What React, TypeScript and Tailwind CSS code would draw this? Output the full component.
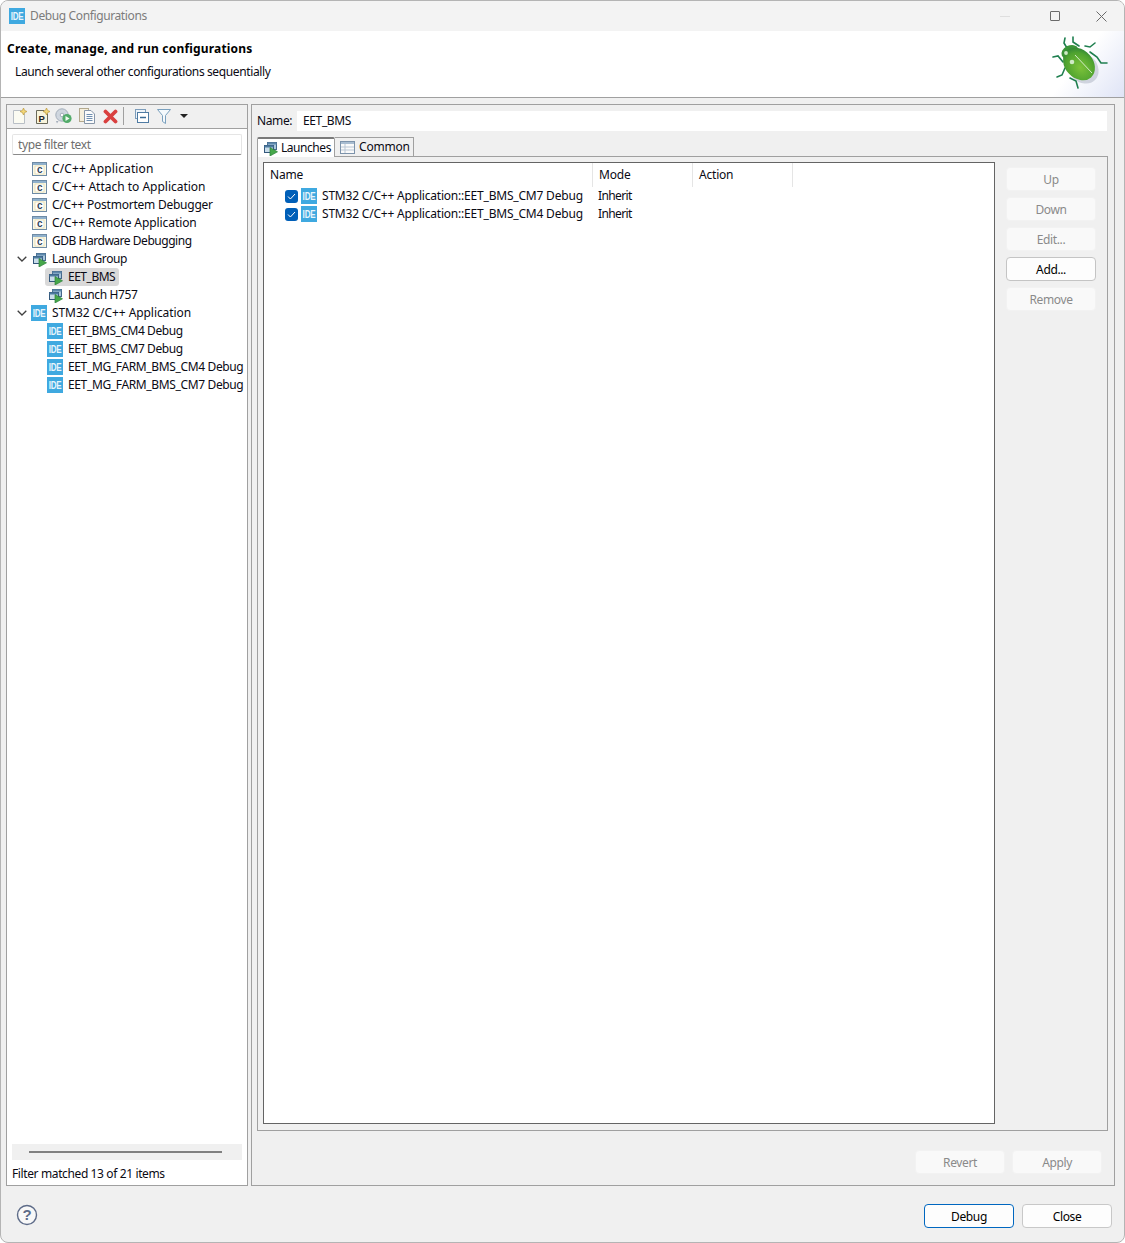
import type { ReactNode } from "react";

function IdeIcon({ className = "" }: { className?: string }) {
    return (
        <svg width="16" height="16" viewBox="0 0 16 16" className={`shrink-0 ${className}`}>
            <rect width="16" height="16" fill="#3fa9e0" />
            <text transform="translate(8 12) scale(0.8 1)" textAnchor="middle" fontSize="10" fontWeight="700" fill="#e8f5fc" fontFamily="'Liberation Sans', sans-serif">IDE</text>
        </svg>
    );
}

function CIcon() {
    return (
        <svg width="16" height="16" viewBox="0 0 16 16" className="shrink-0">
            <rect x="1.5" y="1.5" width="14" height="13" fill="#fbf8e6" stroke="#6e8ba5" />
            <rect x="2" y="2" width="13" height="2" fill="#8fb0cc" />
            <rect x="4" y="5" width="9" height="8" fill="#ffffff" stroke="#d9cf9a" strokeWidth="0.6" />
            <text x="8.5" y="12" textAnchor="middle" fontSize="10" fontWeight="700" fill="#33465c" fontFamily="'Liberation Sans', sans-serif">c</text>
        </svg>
    );
}

function GroupIcon() {
    return (
        <svg width="16" height="16" viewBox="0 0 16 16" className="shrink-0">
            <g transform="translate(1 0)">
                <rect x="4.5" y="2.5" width="9" height="7" fill="#a9c6dd" stroke="#44688a" />
                <rect x="4.5" y="2.5" width="9" height="2" fill="#5e88ac" />
                <rect x="1.5" y="5.5" width="9" height="7" fill="#c9dcea" stroke="#34587c" />
                <rect x="1.5" y="5.5" width="9" height="2" fill="#4d7aa0" />
                <path d="M7 7.5 L14.5 11.8 L7 16 Z" fill="#46a84a" stroke="#2c7f3a" strokeWidth="0.7" />
            </g>
        </svg>
    );
}

function Chevron() {
    return (
        <svg width="10" height="6" viewBox="0 0 10 6" className="shrink-0">
            <path d="M0.7 0.7 L5 5 L9.3 0.7" fill="none" stroke="#404040" strokeWidth="1.3" />
        </svg>
    );
}

function NewIcon({ p = false }: { p?: boolean }) {
    return (
        <svg width="16" height="16" viewBox="0 0 16 16" className="shrink-0">
            <path d="M1.5 2.5 H9 L12.5 6 V15.5 H1.5 Z" fill={p ? "#f8f4dc" : "#fbfbf2"} stroke={p ? "#6a6a5a" : "#b9bfc6"} />
            {p && <text x="6.5" y="14" textAnchor="middle" fontSize="9.5" fontWeight="700" fill="#222" fontFamily="'Liberation Sans', sans-serif">P</text>}
            <path d="M11.5 0 L12.6 2.4 L15 3.5 L12.6 4.6 L11.5 7 L10.4 4.6 L8 3.5 L10.4 2.4 Z" fill="#f2d777" stroke="#b58f2c" strokeWidth="0.6" />
        </svg>
    );
}

function DiscIcon() {
    return (
        <svg width="17" height="16" viewBox="0 0 17 16" className="shrink-0">
            <circle cx="7" cy="7" r="6.2" fill="#cfd6df" stroke="#a4aebb" />
            <circle cx="7" cy="7" r="1.8" fill="#fff" stroke="#a4aebb" />
            <circle cx="12" cy="10.5" r="4.6" fill="#52ab6a" />
            <path d="M10.5 8 L14.6 10.5 L10.5 13 Z" fill="#f2fbf2" />
            <path d="M1 13 L3.5 13 L2 15.5 Z" fill="#a4aebb" />
        </svg>
    );
}

function CopyIcon() {
    return (
        <svg width="16" height="16" viewBox="0 0 16 16" className="shrink-0">
            <rect x="0.5" y="0.5" width="9" height="13" fill="#f6efdc" stroke="#b3a98e" />
            <path d="M5.5 2.5 H12 L15.5 6 V15.5 H5.5 Z" fill="#fbfbfb" stroke="#8796a8" />
            <path d="M7.5 6.5 H13.5 M7.5 8.5 H13.5 M7.5 10.5 H13.5 M7.5 12.5 H13.5" stroke="#6f8fb0" />
        </svg>
    );
}

function DeleteIcon() {
    return (
        <svg width="15" height="15" viewBox="0 0 15 15" className="shrink-0">
            <path d="M2.5 2.5 L12.5 12.5 M12.5 2.5 L2.5 12.5" stroke="#d9403f" strokeWidth="3.8" strokeLinecap="round" />
        </svg>
    );
}

function CollapseIcon() {
    return (
        <svg width="14" height="14" viewBox="0 0 14 14" className="shrink-0">
            <rect x="0.5" y="0.5" width="10" height="9" fill="#eef4fa" stroke="#7d9dbb" />
            <rect x="2.5" y="3.5" width="11" height="10" fill="#fff" stroke="#4f7ba3" />
            <path d="M5 8.5 H11" stroke="#3b6a94" strokeWidth="1.5" />
        </svg>
    );
}

function FilterIcon() {
    return (
        <svg width="14" height="15" viewBox="0 0 14 15" className="shrink-0">
            <path d="M0.5 0.5 H13.5 L8.5 6.5 V14.5 L5.5 12.5 V6.5 Z" fill="#f4f9fc" stroke="#7aa0be" />
        </svg>
    );
}

function TableIcon() {
    return (
        <svg width="15" height="13" viewBox="0 0 15 13" className="shrink-0">
            <rect x="0.5" y="0.5" width="14" height="12" fill="#fafafa" stroke="#7d93ab" />
            <rect x="1" y="1" width="13" height="2" fill="#a9bdd1" />
            <path d="M5 3 V12 M1 6 H14 M1 9 H14" stroke="#b9c6d4" />
        </svg>
    );
}

function CheckBox() {
    return (
        <span className="flex h-[13px] w-[13px] shrink-0 items-center justify-center rounded-[3px] bg-[#005fb8]">
            <svg width="9" height="7" viewBox="0 0 9 7">
                <path d="M1 3.5 L3.4 6 L8 1" fill="none" stroke="#ffffff" strokeWidth="1" />
            </svg>
        </span>
    );
}

function BugLogo() {
    const legs = [
        "M1065 38 L1064 43 L1067 48",
        "M1073 37 L1073 42 L1079 46",
        "M1095 43 L1090 47 L1085 46",
        "M1053 57 L1058 56 L1063 62",
        "M1107 63 L1101 63 L1097 57 L1090 52",
        "M1057 77 L1062 75 L1065 68",
        "M1078 88 L1076 81 L1070 78",
    ];
    return (
        <svg width="62" height="66" viewBox="1050 31 62 66" className="mr-[12px] shrink-0">
            <defs>
                <radialGradient id="shell" cx="0.6" cy="0.55" r="0.65">
                    <stop offset="0" stopColor="#7cc23a" />
                    <stop offset="0.7" stopColor="#4fa32f" />
                    <stop offset="1" stopColor="#2a8038" />
                </radialGradient>
            </defs>
            <ellipse cx="1083" cy="68" rx="17" ry="14" fill="#8a92a6" opacity="0.35" transform="rotate(45 1083 68)" />
            {legs.map((d) => (
                <path key={d} d={d} fill="none" stroke="#1f7f50" strokeWidth="1.6" strokeLinecap="round" />
            ))}
            <ellipse cx="1070" cy="52" rx="9" ry="6.5" fill="#3b9438" transform="rotate(-25 1070 52)" />
            <ellipse cx="1079" cy="64" rx="18" ry="14" fill="url(#shell)" transform="rotate(48 1079 64)" />
            <path d="M1075 55 L1092 73" stroke="#e2f3da" strokeWidth="0.9" />
            <circle cx="1066" cy="53" r="1.9" fill="#cfeac6" />
            <circle cx="1072" cy="62" r="2.3" fill="#cfeac6" />
        </svg>
    );
}

function TreeRow({ indent, icon, chevron, selected, track = "", children }: { indent: string; icon: ReactNode; chevron?: boolean; selected?: boolean; track?: string; children: ReactNode }) {
    return (
        <div className={`flex h-[18px] items-center ${indent}`}>
            {chevron && <span className="mr-[4px] ml-[-14px] flex w-[10px] justify-center"><Chevron /></span>}
            <span className={`flex h-[18px] items-center whitespace-nowrap ${selected ? "ml-[-2px] rounded-[3px] bg-[#d9d9d9] pr-[4px] pl-[2px]" : ""}`}>
                {icon}
                <span className={`ml-[5px] ${track}`}>{children}</span>
            </span>
        </div>
    );
}

function SideButton({ label, active }: { label: string; active?: boolean }) {
    return (
        <button className={`flex h-[24px] w-[90px] items-center justify-center rounded-[4px] border pt-[1px] ${active ? "border-[#c4c4c4] bg-[#fdfdfd] text-black" : "border-[#f2f2f2] bg-[#f9f9f9] text-[#8a8a8a]"}`}>
            {label}
        </button>
    );
}

export default function App() {
    return (
        <div className="flex h-[1243px] w-[1125px] flex-col overflow-hidden rounded-[8px] border border-[#b4b4b4] bg-[#f0f0f0] font-['Noto_Sans','Open_Sans',sans-serif] text-[12px] leading-[18px] tracking-[-0.38px] text-[#0a0a14]">
            {/* title bar */}
            <div className="flex h-[30px] shrink-0 items-center bg-[#f3f3f3] pl-[8px]">
                <IdeIcon />
                <span className="ml-[5px] text-[#7c7c7c]">Debug Configurations</span>
                <div className="ml-auto flex items-center pr-[17px]">
                    <span className="mr-[40px] h-px w-[10px] bg-[#dedede]" />
                    <span className="mr-[36px] h-[10px] w-[10px] rounded-[1px] border border-[#6a6a6a]" />
                    <svg width="11" height="11" viewBox="0 0 11 11">
                        <path d="M0.5 0.5 L10.5 10.5 M10.5 0.5 L0.5 10.5" stroke="#6a6a6a" />
                    </svg>
                </div>
            </div>

            {/* header */}
            <div className="flex h-[67px] shrink-0 justify-between border-b border-[#a0a0a0] bg-[linear-gradient(128deg,#ffffff_calc(100%-58px),#dfe4f6_100%)] pl-[6px]">
                <div className="pt-[9px]">
                    <div className="font-bold tracking-[0.18px] text-black">Create, manage, and run configurations</div>
                    <div className="mt-[5px] pl-[8px]">Launch several other configurations sequentially</div>
                </div>
                <BugLogo />
            </div>

            {/* panels */}
            <div className="flex min-h-0 flex-1 gap-[3px] pt-[6px] pr-[9px] pl-[5px]">
                <div className="flex w-[242px] shrink-0 flex-col border border-[#a0a0a0] bg-white">
                    <div className="flex h-[24px] shrink-0 items-center border-b border-[#a0a0a0] bg-[#f0f0f0] pb-[1px] pl-[5px]">
                        <span className="flex w-[23px]"><NewIcon /></span>
                        <span className="flex w-[20px]"><NewIcon p /></span>
                        <span className="flex w-[24px]"><DiscIcon /></span>
                        <span className="flex w-[24px]"><CopyIcon /></span>
                        <DeleteIcon />
                        <span className="mx-[5px] h-[18px] w-px bg-[#a0a0a0]" />
                        <span className="ml-[6px] flex w-[22px]"><CollapseIcon /></span>
                        <span className="flex w-[23px]"><FilterIcon /></span>
                        <span className="h-0 w-0 border-x-[4px] border-t-[4px] border-x-transparent border-t-[#222]" />
                    </div>
                    <div className="flex min-h-0 flex-1 flex-col px-[5px] pt-[5px]">
                        <input readOnly placeholder="type filter text" className="h-[21px] w-[230px] shrink-0 rounded-[2px] border border-[#e5e5e5] border-b-[#8a8a8a] bg-white px-[5px] text-[12px] outline-none placeholder:text-[#6e6e6e]" />
                        <div className="flex-1 pt-[5px]">
                            <TreeRow indent="pl-[19px]" track="tracking-[0.1px]" icon={<CIcon />}>C/C++ Application</TreeRow>
                            <TreeRow indent="pl-[19px]" track="tracking-[-0.01px]" icon={<CIcon />}>C/C++ Attach to Application</TreeRow>
                            <TreeRow indent="pl-[19px]" track="tracking-[-0.24px]" icon={<CIcon />}>C/C++ Postmortem Debugger</TreeRow>
                            <TreeRow indent="pl-[19px]" track="tracking-[-0.08px]" icon={<CIcon />}>C/C++ Remote Application</TreeRow>
                            <TreeRow indent="pl-[19px]" track="tracking-[-0.47px]" icon={<CIcon />}>GDB Hardware Debugging</TreeRow>
                            <TreeRow indent="pl-[19px]" chevron icon={<GroupIcon />}>Launch Group</TreeRow>
                            <TreeRow indent="pl-[35px]" selected track="tracking-[-0.49px]" icon={<GroupIcon />}>EET_BMS</TreeRow>
                            <TreeRow indent="pl-[35px]" icon={<GroupIcon />}>Launch H757</TreeRow>
                            <TreeRow indent="pl-[19px]" chevron track="tracking-[-0.07px]" icon={<IdeIcon />}>STM32 C/C++ Application</TreeRow>
                            <TreeRow indent="pl-[35px]" track="tracking-[-0.44px]" icon={<IdeIcon />}>EET_BMS_CM4 Debug</TreeRow>
                            <TreeRow indent="pl-[35px]" track="tracking-[-0.44px]" icon={<IdeIcon />}>EET_BMS_CM7 Debug</TreeRow>
                            <TreeRow indent="pl-[35px]" track="tracking-[-0.36px]" icon={<IdeIcon />}>EET_MG_FARM_BMS_CM4 Debug</TreeRow>
                            <TreeRow indent="pl-[35px]" track="tracking-[-0.36px]" icon={<IdeIcon />}>EET_MG_FARM_BMS_CM7 Debug</TreeRow>
                        </div>
                        <div className="flex h-[16px] w-[230px] shrink-0 items-center bg-[#f0f0f0] px-[17px]">
                            <span className="h-[2px] w-[193px] bg-[#808080]" />
                        </div>
                        <div className="flex h-[25px] shrink-0 items-center pt-[2px]">Filter matched 13 of 21 items</div>
                    </div>
                </div>

                <div className="flex min-w-0 flex-1 flex-col border border-[#a0a0a0] px-[5px] pt-[6px]">
                    <div className="flex h-[20px] shrink-0 items-center">
                        <span className="w-[40px]">Name:</span>
                        <input readOnly value="EET_BMS" className="h-[20px] w-[810px] border-0 bg-white px-[6px] pb-[2px] text-[12px] outline-none" />
                    </div>
                    <div className="mt-[6px] mr-[1px] flex h-[994px] shrink-0 flex-col">
                        <div className="flex h-[20px] shrink-0">
                            <div className="flex h-[20px] w-[78px] items-center gap-[3px] rounded-t-[2px] border-x border-t-2 border-x-[#a0a0a0] border-t-[#7a7a7a] bg-white pl-[4px] tracking-[-0.45px]">
                                <GroupIcon />
                                Launches
                            </div>
                            <div className="flex h-[20px] w-[79px] items-center gap-[4px] border-t border-r border-b border-[#a0a0a0] pl-[5px] tracking-[-0.2px]">
                                <TableIcon />
                                Common
                            </div>
                            <div className="flex-1 border-b border-[#a0a0a0]" />
                        </div>
                        <div className="flex min-h-0 flex-1 gap-[11px] border-x border-b border-[#a0a0a0] pt-[5px] pr-[11px] pb-[6px] pl-[5px]">
                            <div className="w-[732px] shrink-0 border border-[#646464] bg-white tracking-[-0.2px]">
                                <div className="flex h-[24px]">
                                    <span className="flex w-[329px] items-center border-r border-[#e5e5e5] pl-[6px]">Name</span>
                                    <span className="flex w-[100px] items-center border-r border-[#e5e5e5] pl-[6px]">Mode</span>
                                    <span className="flex w-[100px] items-center border-r border-[#e5e5e5] pl-[6px]">Action</span>
                                </div>
                                <div>
                                    {["CM7", "CM4"].map((core) => (
                                        <div key={core} className="flex h-[18px] items-center">
                                            <div className="flex w-[329px] items-center pl-[21px]">
                                                <CheckBox />
                                                <IdeIcon className="ml-[3px]" />
                                                <span className="ml-[5px] whitespace-nowrap">STM32 C/C++ Application::EET_BMS_{core} Debug</span>
                                            </div>
                                            <span className="pl-[5px] tracking-[-0.6px]">Inherit</span>
                                        </div>
                                    ))}
                                </div>
                            </div>
                            <div className="flex flex-col gap-[6px] pt-[5px]">
                                <SideButton label="Up" />
                                <SideButton label="Down" />
                                <SideButton label="Edit..." />
                                <SideButton label="Add..." active />
                                <SideButton label="Remove" />
                            </div>
                        </div>
                    </div>
                    <div className="mt-[19px] flex justify-end gap-[7px] pr-[7px]">
                        <SideButton label="Revert" />
                        <SideButton label="Apply" />
                    </div>
                </div>
            </div>

            {/* footer */}
            <div className="flex h-[56px] shrink-0 items-center justify-between pr-[12px] pl-[15px]">
                <svg width="22" height="22" viewBox="0 0 22 22" className="mt-[1px] shrink-0">
                    <circle cx="11" cy="11" r="9.5" fill="#f8f8f8" stroke="#5d6b88" strokeWidth="1.4" />
                    <text x="11" y="16" textAnchor="middle" fontSize="15" fontWeight="700" fill="#5d6b88" fontFamily="'Liberation Sans', sans-serif">?</text>
                </svg>
                <div className="flex gap-[8px] pt-[4px]">
                    <button className="flex h-[24px] w-[90px] items-center justify-center rounded-[4px] border border-[#0067c0] bg-[#fdfdfd] pt-[1px] text-black">Debug</button>
                    <button className="flex h-[24px] w-[90px] items-center justify-center rounded-[4px] border border-[#c8c8c8] bg-[#fdfdfd] pt-[1px] text-black">Close</button>
                </div>
            </div>
        </div>
    );
}
